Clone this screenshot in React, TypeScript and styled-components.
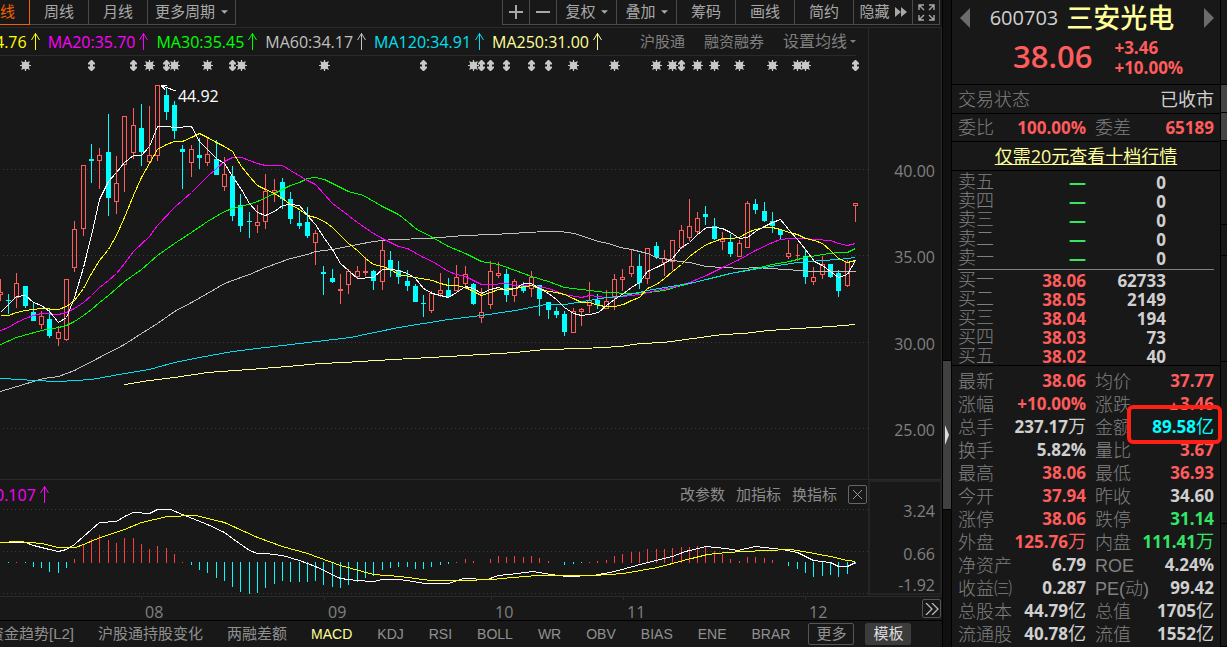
import React from "react";
import styled, { createGlobalStyle } from "styled-components";

const color = {
  bg: "#181818",
  line: "#2a2a2a",
  border: "#4a4a4a",
  text: "#a8a8a8",
  dim: "#808080",
  red: "#ff5c5c",
  green: "#33e666",
  cyan: "#00ffff",
  value: "#d0d0d0",
  yellow: "#ffff99",
  accent: "#f26100",
};

const latin = `"Open Sans", "Noto Sans CJK SC", sans-serif`;
const han = `"Liberation Sans", "Noto Sans CJK SC", sans-serif`;

const GlobalStyle = createGlobalStyle`
  *, *::before, *::after { box-sizing: border-box; }
  body { margin: 0; background: ${color.bg}; color: ${color.text}; font: 15px/20px ${han}; }
  button { font: inherit; color: inherit; background: none; border: 0; padding: 0; margin: 0; cursor: pointer; white-space: nowrap; }
  a { color: inherit; }
  svg { display: block; }
`;

/* ---------- page frame ---------- */

const Page = styled.div`
  display: flex;
  min-height: 100vh;
  overflow: hidden;
`;

const Main = styled.main`
  flex: 1;
  min-width: 0;
  display: flex;
  flex-direction: column;
  overflow: hidden;
`;

const Gutter = styled.div`
  width: 9px;
  display: grid;
  grid-template-rows: 360fr 150fr 137fr;
  background: #101010;
  border-left: 1px solid #000;
`;

const Thumb = styled.button`
  grid-row: 2;
  display: flex;
  align-items: center;
  justify-content: center;
  background: #404040;
  border-top: 1px solid #000;
  border-bottom: 1px solid #000;
`;

const Panel = styled.aside`
  width: 270px;
  flex: none;
  border: solid #000;
  border-width: 0 1px;
`;

const Strip = styled.div`
  width: 6px;
  flex: none;
  display: grid;
  grid-template-rows: 85fr 28fr 28fr 84fr 31fr 106fr 162fr 123fr;
`;

const StripCell = styled.div<{ $filled?: boolean }>`
  background: ${(p) => (p.$filled ? "#444" : "none")};
  border-bottom: 1px solid #000;
`;

/* ---------- toolbar ---------- */

const Toolbar = styled.div`
  display: flex;
  justify-content: space-between;
  height: 28px;
  padding-right: 2px;
  border-bottom: 1px solid ${color.line};
`;

const ButtonGroup = styled.div`
  display: flex;
  height: 25px;
`;

const PeriodButton = styled.button<{ $width: number; $active?: boolean }>`
  display: flex;
  align-items: center;
  justify-content: ${(p) => (p.$active ? "flex-start" : "center")};
  gap: 6px;
  width: ${(p) => p.$width}px;
  color: ${(p) => (p.$active ? color.accent : color.text)};
  border: solid ${(p) => (p.$active ? color.accent : color.border)};
  border-width: 0 1px 1px 0;
`;

const ToolButton = styled.button<{ $width: number }>`
  display: flex;
  align-items: center;
  justify-content: center;
  gap: 5px;
  width: ${(p) => p.$width}px;
  border: solid ${color.border};
  border-width: 0 0 1px 1px;
  &:last-child {
    border-right-width: 1px;
  }
`;

/* ---------- price chart ---------- */

const ChartRow = styled.section<{ $grow?: boolean }>`
  display: flex;
  flex: ${(p) => (p.$grow ? "1" : "none")};
`;

const Plot = styled.div`
  flex: 1;
  min-width: 0;
  display: flex;
  flex-direction: column;
`;

const Legend = styled.div`
  display: flex;
  align-items: center;
  gap: 8px;
  height: 28px;
  margin-right: 12px;
  border-bottom: 1px solid ${color.line};
`;

const LegendItem = styled.span<{ $color: string; $clipped?: boolean }>`
  display: flex;
  align-items: center;
  gap: 4px;
  margin-left: ${(p) => (p.$clipped ? "-5px" : "0")};
  font: 16px/20px ${latin};
  color: ${(p) => p.$color};
  white-space: nowrap;
`;

const LegendLinks = styled.div`
  display: flex;
  gap: 19px;
  margin-left: auto;
  color: ${color.dim};
`;

const AverageButton = styled.button`
  display: flex;
  align-items: center;
  gap: 3px;
  font-size: 16px;
`;

const Canvas = styled.div`
  position: relative;
  flex: 1;
  min-height: 423px;
`;

const ChartSvg = styled.svg`
  position: absolute;
  inset: 0;
  width: 100%;
  height: 100%;
`;

const PeakLabel = styled.span`
  position: absolute;
  left: 20.5%;
  top: 7%;
  font: 16px/20px ${latin};
  color: #fff;
`;

const PriceAxis = styled.div`
  display: grid;
  grid-template-rows: 100fr 86fr 86fr 87fr 86fr 6fr;
  align-items: center;
  width: 74px;
  padding-right: 6px;
  border: solid ${color.line};
  border-width: 0 1px;
  font: 16px/20px ${latin};
  color: ${color.dim};
  text-align: right;
`;

const AxisLabel = styled.span<{ $row: number }>`
  grid-row: ${(p) => p.$row};
`;

/* ---------- indicator chart ---------- */

const IndicatorSection = styled(ChartRow)`
  height: 118px;
  border-top: 1px solid ${color.line};
  border-bottom: 1px solid ${color.line};
`;

const IndicatorHead = styled.div`
  display: flex;
  align-items: center;
  gap: 11px;
  height: 29px;
  padding-right: 1px;
`;

const IndicatorLinks = styled.div`
  display: flex;
  align-items: center;
  gap: 11px;
  margin-left: auto;
  color: #8c8c8c;
`;

const CloseButton = styled.button`
  display: grid;
  place-items: center;
  width: 19px;
  height: 19px;
  border: 1px solid #666;
  border-radius: 2px;
`;

const IndicatorSvg = styled.svg`
  width: 100%;
  height: 87px;
`;

const IndicatorAxis = styled.div`
  display: grid;
  grid-template-rows: 9fr 40fr 46fr 16fr;
  align-items: center;
  width: 74px;
  height: 115px;
  padding-right: 5px;
  border: 2px solid #242424;
  font: 16px/16px ${latin};
  color: ${color.dim};
  text-align: right;
`;

const TimeAxis = styled.div`
  display: grid;
  grid-template-columns: 141fr 183fr 167fr 132fr 182fr 137fr;
  height: 23px;
  font: 16px/16px ${latin};
  color: ${color.dim};
`;

const TimeCell = styled.div`
  display: flex;
  align-items: flex-end;
  gap: 3px;
  &:not(:first-child)::before {
    content: "";
    width: 1px;
    height: 3px;
    align-self: flex-start;
    background: ${color.line};
  }
`;

const ScrollButton = styled.button`
  display: grid;
  place-items: center;
  align-self: center;
  width: 19px;
  height: 19px;
  margin: 0 1px 0 auto;
  border: 1px solid #555;
  border-radius: 2px;
`;

/* ---------- indicator tabs ---------- */

const Tabs = styled.nav`
  display: flex;
  align-items: center;
  gap: 24px;
  height: 27px;
  border-top: 1px solid #000;
  color: #909090;
`;

const Tab = styled.button<{ $active?: boolean; $latin?: boolean; $clipped?: boolean }>`
  font-size: ${(p) => (p.$latin ? "14px" : "15px")};
  color: ${(p) => (p.$active ? color.yellow : "inherit")};
  margin-left: ${(p) => (p.$clipped ? "-11px" : "0")};
  margin-right: ${(p) => (p.$latin ? "1px" : "0")};
`;

const TabActions = styled.div`
  display: flex;
  gap: 11px;
  margin-left: -7px;
`;

const ActionButton = styled.button<{ $filled?: boolean }>`
  width: 46px;
  height: 22px;
  border: 1px solid ${(p) => (p.$filled ? "#3c3c3c" : "#555")};
  border-radius: 2px;
  background: ${(p) => (p.$filled ? "#3c3c3c" : "none")};
  color: ${(p) => (p.$filled ? "#ddd" : "inherit")};
`;

/* ---------- quote panel ---------- */

const QuoteHead = styled.header`
  height: 85px;
  border-bottom: 1px solid #000;
  font-family: ${latin};
`;

const NameRow = styled.div`
  display: flex;
  align-items: center;
  justify-content: space-between;
  height: 35px;
  padding: 0 6px 0 8px;
`;

const StockName = styled.h1`
  display: flex;
  align-items: center;
  gap: 8px;
  margin: 0;
  padding-right: 10px;
  font: 500 27px/35px ${latin};
  color: ${color.yellow};
`;

const StockCode = styled.span`
  font-size: 20px;
  font-weight: 400;
  color: ${color.value};
`;

const PriceRow = styled.div`
  display: flex;
  align-items: flex-start;
  gap: 22px;
  padding-left: 61px;
  color: ${color.red};
`;

const Price = styled.strong`
  font: 600 31px/42px ${latin};
`;

const Change = styled.div`
  padding-top: 3px;
  font: 700 17px/20px ${latin};
`;

const InfoRow = styled.div`
  display: flex;
  align-items: center;
  justify-content: space-between;
  height: 29px;
  padding: 2px 6px 0;
  border-bottom: 1px solid #000;
  font-size: 18px;
`;

const RatioRow = styled(InfoRow)`
  display: grid;
  grid-template-columns: 54px 74px 54px 1fr;
  height: 28px;
  padding-top: 0;
  > :nth-child(even) {
    text-align: right;
  }
  > :nth-child(3) {
    padding-left: 9px;
  }
`;

const LinkRow = styled(InfoRow)`
  justify-content: center;
  padding-top: 0;
  color: ${color.yellow};
  font-family: ${latin};
`;

const Label = styled.span`
  font-weight: 300;
  color: ${color.dim};
`;

const State = styled.span`
  color: ${color.value};
`;

const Figure = styled.span<{ $color?: string }>`
  font: 700 17px/19px ${latin};
  color: ${(p) => p.$color ?? color.value};
`;

const Unit = styled.span`
  font-size: 18px;
  font-weight: 400;
`;

const Book = styled.div`
  padding: 2px 6px 0;
  height: 195px;
  border-bottom: 1px solid #000;
`;

const BookTable = styled.table`
  width: 100%;
  border-collapse: separate;
  border-spacing: 0;
  table-layout: fixed;
  & + & {
    margin-top: 1px;
    padding-top: 1px;
    border-top: 1px solid #808080;
  }
`;

const BookRow = styled.tr`
  height: 19px;
  th,
  td {
    padding: 0;
    height: 19px;
    line-height: 19px;
    text-align: right;
  }
  th {
    width: 56px;
    font-size: 18px;
    text-align: left;
  }
  td:nth-child(2) {
    width: 72px;
  }
  td:last-child {
    padding-right: 48px;
  }
  ${Label}, ${Figure} {
    display: block;
  }
`;

const StatsTable = styled.table`
  width: calc(100% - 12px);
  margin: 4px 6px 0;
  border-collapse: collapse;
  table-layout: fixed;
`;

const StatsRow = styled.tr`
  height: 23px;
  th,
  td {
    padding: 0;
    height: 23px;
    line-height: 20px;
    white-space: nowrap;
  }
  th {
    width: 54px;
    font-size: 18px;
    text-align: left;
  }
  td {
    position: relative;
    text-align: right;
  }
  td:nth-child(2) {
    width: 74px;
  }
  th:nth-child(3) {
    padding-left: 9px;
  }
`;

const Highlight = styled.span`
  position: absolute;
  z-index: 1;
  left: -13px;
  right: -8px;
  top: -11px;
  height: 39px;
  border: 4px solid #ff2014;
  border-radius: 6px;
  pointer-events: none;
`;

const RiseMark = styled.svg`
  display: inline-block;
  width: 8px;
  height: 8px;
  margin-right: 2px;
`;

/* ---------- data ---------- */

// Colour (r rising, c falling), high, low, body top, body bottom.
type Candle = ["r" | "c", number, number, number, number];

const candles: Candle[] = [
  ["c", 294, 314, 300, 301], ["r", 273, 308, 283, 298], ["c", 286, 308, 286, 306], ["c", 302, 321, 312, 321],
  ["r", 311, 329, 316, 325], ["c", 308, 338, 319, 336], ["r", 326, 346, 332, 339], ["r", 279, 341, 279, 340],
  ["r", 221, 272, 229, 268], ["r", 165, 236, 165, 229], ["c", 144, 183, 159, 161], ["r", 148, 189, 155, 161],
  ["c", 114, 216, 152, 198], ["r", 156, 214, 183, 202], ["r", 116, 192, 116, 165], ["r", 108, 159, 125, 153],
  ["c", 104, 166, 128, 152], ["r", 106, 164, 155, 162], ["r", 85, 161, 85, 156], ["c", 88, 120, 95, 112],
  ["c", 101, 139, 105, 131], ["c", 145, 189, 149, 152], ["r", 145, 177, 149, 163], ["c", 138, 169, 155, 158],
  ["r", 138, 166, 154, 163], ["c", 140, 175, 159, 175], ["r", 157, 191, 174, 187], ["c", 166, 221, 176, 216],
  ["c", 194, 232, 205, 226], ["c", 212, 238, 221, 222], ["r", 205, 233, 222, 226], ["r", 174, 229, 191, 222],
  ["r", 179, 202, 190, 193], ["c", 178, 209, 182, 199], ["c", 192, 224, 199, 219], ["c", 211, 229, 223, 226],
  ["c", 207, 238, 222, 236], ["r", 230, 265, 233, 243], ["c", 266, 295, 272, 274], ["c", 269, 283, 278, 282],
  ["r", 274, 304, 289, 291], ["r", 269, 294, 271, 285], ["r", 266, 279, 271, 277], ["r", 257, 276, 271, 273],
  ["c", 270, 290, 271, 281], ["r", 241, 290, 250, 282], ["c", 251, 277, 260, 270], ["c", 261, 284, 270, 277],
  ["c", 270, 291, 281, 286], ["c", 284, 302, 286, 302], ["c", 295, 317, 303, 304], ["r", 291, 313, 293, 311],
  ["r", 273, 297, 290, 294], ["c", 278, 298, 290, 297], ["r", 265, 291, 277, 291], ["r", 266, 289, 274, 284],
  ["c", 283, 305, 284, 304], ["r", 288, 323, 312, 318], ["r", 261, 309, 271, 305], ["r", 262, 278, 273, 276],
  ["c", 269, 302, 274, 295], ["r", 279, 302, 281, 296], ["c", 282, 293, 286, 291], ["r", 271, 297, 277, 289],
  ["c", 285, 316, 285, 299], ["c", 302, 319, 302, 310], ["c", 307, 318, 311, 315], ["c", 311, 336, 314, 332],
  ["r", 308, 333, 311, 333], ["r", 308, 326, 309, 312], ["r", 282, 313, 300, 306], ["c", 294, 309, 300, 305],
  ["r", 290, 309, 301, 309], ["r", 274, 310, 279, 298], ["r", 269, 291, 277, 280], ["r", 250, 277, 266, 274],
  ["c", 254, 289, 266, 283], ["r", 248, 284, 248, 279], ["c", 242, 259, 246, 257], ["r", 250, 276, 258, 263],
  ["r", 240, 270, 240, 262], ["r", 225, 249, 230, 248], ["r", 199, 241, 226, 238], ["r", 212, 234, 218, 232],
  ["c", 206, 225, 214, 217], ["c", 218, 240, 226, 239], ["r", 232, 250, 239, 242], ["c", 234, 257, 242, 254],
  ["r", 240, 257, 243, 257], ["r", 201, 248, 203, 248], ["c", 199, 214, 204, 210], ["c", 202, 222, 211, 221],
  ["c", 212, 233, 221, 226], ["c", 229, 239, 230, 235], ["r", 240, 259, 253, 257], ["r", 244, 261, 255, 256],
  ["c", 249, 284, 256, 277], ["r", 267, 285, 277, 282], ["r", 256, 279, 264, 275], ["c", 264, 278, 264, 277],
  ["c", 270, 297, 273, 291], ["r", 260, 287, 262, 286], ["r", 203, 222, 203, 206],
];

const barX = (i: number) => Math.floor(8.46 + i * 8.303);

const averages = [
  { color: "#ffff99", points: "124,384 149,380 174,377 207,372 249,369 287,366 320,363 343,362 393,359 448,356 515,352 545,349 583,348 620,346 640,343 663,342 700,337 722,334 743,333 768,330 797,328 830,326 855,324" },
  { color: "#c0c0c0", points: "0,391 33,381 43,378 58,376 74,370 99,357 124,344 141,333 157,323 174,311 191,302 207,293 224,283 232,280 249,274 265,267 290,258 307,254 315,251 332,249 357,244 373,241 393,239 428,238 463,235 493,234 510,233 545,231 560,231 574,233 598,241 608,243 620,247 631,249 647,253 656,257 672,260 689,262 706,266 722,267 743,268 755,267 800,270 808,271 855,271" },
  { color: "#00ff00", points: "0,344 16,337 41,330 58,327 66,325 74,321 83,315 91,309 99,302 108,295 124,281 141,269 157,255 174,243 191,232 207,221 224,211 232,208 241,206 257,201 274,193 290,185 299,182 307,178 315,177 324,179 332,183 340,187 348,191 363,195 382,206 398,214 407,221 415,228 432,237 448,246 465,253 481,261 498,264 515,270 531,276 548,281 564,287 581,289 606,292 631,293 647,292 664,290 681,285 706,279 730,273 755,268 772,264 789,261 805,257 822,254 838,252 847,252 855,248" },
  { color: "#ff00ff", points: "0,330 8,327 16,322 25,318 33,315 41,313 58,314 66,312 74,308 83,302 91,295 99,287 108,280 116,273 124,263 133,251 149,236 157,225 174,207 191,192 207,176 224,161 232,157 241,157 257,163 265,165 282,165 290,170 307,180 315,184 324,194 332,203 340,209 357,222 373,233 382,238 398,246 407,248 423,257 432,261 448,271 456,274 465,276 481,284 490,284 506,283 515,285 531,285 548,288 564,294 581,297 589,295 606,297 623,296 639,294 656,290 672,287 689,282 706,275 722,267 739,259 755,250 772,242 780,239 789,238 805,238 814,239 830,240 838,243 847,245 855,243" },
  { color: "#00e0f0", points: "0,378 20,379 33,380 58,381 91,379 124,373 149,369 174,362 199,357 232,351 265,347 299,343 350,337 398,327 448,319 481,315 515,310 545,304 564,304 589,300 606,297 620,296 647,290 689,283 730,273 764,267 797,262 822,260 838,259 855,257" },
  { color: "#ffff00", points: "0,315 8,315 16,312 25,310 41,308 58,309 66,306 74,300 83,288 91,273 99,260 108,249 116,235 124,217 133,195 141,177 149,163 157,149 166,144 174,141 182,141 191,137 199,133 207,137 216,142 224,146 232,151 241,166 249,176 257,185 265,189 274,193 282,198 290,204 299,209 307,215 315,217 324,221 332,227 340,235 348,243 357,250 365,258 373,264 382,266 390,269 398,274 415,277 432,280 440,283 448,285 456,285 465,287 473,291 481,295 490,292 498,289 515,288 531,285 539,288 548,291 556,292 564,294 573,298 581,302 589,302 598,305 606,306 614,306 623,304 631,300 639,297 647,288 656,284 664,278 672,271 681,264 689,256 697,250 706,244 714,241 722,238 730,238 739,237 747,232 755,229 764,227 772,227 780,229 789,232 797,234 805,238 814,240 822,243 830,250 838,258 847,262 855,260" },
  { color: "#ffffff", points: "0,312 16,296 25,295 33,302 41,305 49,311 58,322 66,317 74,297 83,267 91,235 99,199 108,181 116,172 124,162 133,155 141,155 149,146 157,126 166,126 174,127 191,126 199,141 207,149 216,158 224,163 232,176 241,189 249,203 257,212 265,215 274,211 282,205 290,204 299,205 307,215 315,224 324,238 332,249 340,263 357,278 373,277 382,269 390,269 398,270 407,273 415,278 423,288 432,293 440,295 448,297 456,292 465,286 473,288 481,293 490,289 498,287 506,290 515,288 523,283 531,283 539,288 548,293 556,299 564,307 573,313 581,315 589,314 598,312 606,305 614,299 623,293 631,287 639,282 647,271 656,267 664,263 672,258 681,247 689,242 697,234 706,227 714,227 722,228 730,232 739,238 747,237 755,231 764,226 772,222 780,219 789,230 797,239 805,249 814,261 822,265 830,271 838,277 847,274 855,260" },
];

const starMarks = [25, 149, 174, 207, 241, 324, 473, 573, 614, 656, 672, 697, 714, 739, 772, 797, 805];
const arrowMarks = [91, 133, 166, 232, 423, 481, 490, 506, 531, 548, 681, 855];

// Histogram heights above (positive) or below (negative) the zero line.
const histogram = [
  -1, 1, -1, -5, -6, -10, -11, -6, 4, 18, 24, 28, 23, 20, 25, 25, 19, 14, 17, 15, 9, 1, -3, -8, -11, -16, -19, -25, -30,
  -32, -31, -26, -22, -19, -20, -20, -20, -19, -23, -25, -26, -23, -20, -16, -14, -8, -6, -5, -5, -7, -7, -5, -3, -2, 1,
  4, 2, 0, 4, 7, 6, 7, 6, 7, 5, 2, 0, -3, -2, -1, 1, 2, 3, 7, 9, 11, 11, 14, 14, 14, 15, 16, 16, 17, 16, 12, 9, 4, 2,
  6, 6, 5, 3, 0, -4, -7, -11, -15, -14, -13, -15, -12, -2,
];

const difPoints =
  "0,542 25,542 33,545 41,547 49,549 58,551 66,549 74,544 83,536 99,522 116,521 124,516 133,512 149,513 157,509 170,509 182,514 207,524 224,532 232,538 249,550 257,553 265,553 282,555 299,560 315,566 340,578 356,580 373,581 382,579 399,579 413,581 424,583 448,583 463,578 487,579 498,575 517,573 532,571 550,574 567,576 593,575 614,571 647,562 672,556 685,551 706,546 725,548 737,550 755,546 782,549 797,552 813,560 830,562 838,566 847,566 855,562";
const deaPoints =
  "0,542 17,541 41,543 58,547 75,547 83,544 100,537 124,529 141,522 167,516 195,515 224,522 257,537 282,546 307,553 340,565 373,574 400,576 430,580 460,580 493,579 500,578 537,575 593,575 623,573 657,567 683,560 707,554 727,552 743,551 790,549 803,551 830,556 847,560 855,561";

const legend = [
  { text: "4.76", color: "#ffff00" },
  { text: "MA20:35.70", color: "#ff00ff" },
  { text: "MA30:35.45", color: "#00ff00" },
  { text: "MA60:34.17", color: "#c0c0c0" },
  { text: "MA120:34.91", color: "#00e0f0" },
  { text: "MA250:31.00", color: "#ffff99" },
];

const latinTabs = ["MACD", "KDJ", "RSI", "BOLL", "WR", "OBV", "BIAS", "ENE", "BRAR"];

const sells = ["卖五", "卖四", "卖三", "卖二", "卖一"];
const buys = [
  ["买一", "38.06", "62733"],
  ["买二", "38.05", "2149"],
  ["买三", "38.04", "194"],
  ["买四", "38.03", "73"],
  ["买五", "38.02", "40"],
];

type Stat = { label: string; value: string; unit?: string; color?: string; rise?: boolean; marked?: boolean };

const { red, green, cyan } = color;
const stats: [Stat, Stat][] = [
  [{ label: "最新", value: "38.06", color: red }, { label: "均价", value: "37.77", color: red }],
  [{ label: "涨幅", value: "+10.00%", color: red }, { label: "涨跌", value: "3.46", color: red, rise: true }],
  [{ label: "总手", value: "237.17", unit: "万" }, { label: "金额", value: "89.58", unit: "亿", color: cyan, marked: true }],
  [{ label: "换手", value: "5.82%" }, { label: "量比", value: "3.67", color: red }],
  [{ label: "最高", value: "38.06", color: red }, { label: "最低", value: "36.93", color: red }],
  [{ label: "今开", value: "37.94", color: red }, { label: "昨收", value: "34.60" }],
  [{ label: "涨停", value: "38.06", color: red }, { label: "跌停", value: "31.14", color: green }],
  [{ label: "外盘", value: "125.76", unit: "万", color: red }, { label: "内盘", value: "111.41", unit: "万", color: green }],
  [{ label: "净资产", value: "6.79" }, { label: "ROE", value: "4.24%" }],
  [{ label: "收益㈢", value: "0.287" }, { label: "PE(动)", value: "99.42" }],
  [{ label: "总股本", value: "44.79", unit: "亿" }, { label: "总值", value: "1705", unit: "亿" }],
  [{ label: "流通股", value: "40.78", unit: "亿" }, { label: "流值", value: "1552", unit: "亿" }],
];

/* ---------- icons ---------- */

const Caret = ({ small }: { small?: boolean }) => (
  <svg width={small ? 6 : 7} height={small ? 3 : 4} viewBox="0 0 8 4" fill="currentColor">
    <path d="M0 0h8L4 4z" />
  </svg>
);

const UpArrow = () => (
  <svg width="9" height="17" viewBox="0 0 9 17" fill="none" stroke="currentColor">
    <path d="M4.5 0v17M4.5 .5L.5 7M4.5 .5L8.5 7" />
  </svg>
);

const Cross = ({ minus }: { minus?: boolean }) => (
  <svg width="14" height="14" viewBox="0 0 14 14" stroke="currentColor" strokeWidth="2">
    <path d={minus ? "M0 7h14" : "M0 7h14M7 0v14"} />
  </svg>
);

const Expand = () => (
  <svg width="17" height="17" viewBox="0 0 17 17" fill="none" stroke="currentColor" strokeWidth="1.4">
    <path d="M1 6V1h5M1 1l5 5M11 1h5v5M16 1l-5 5M1 11v5h5M1 16l5-5M11 16h5v-5M16 16l-5-5" />
  </svg>
);

const FastForward = () => (
  <svg width="12" height="10" viewBox="0 0 12 10" fill="currentColor">
    <path d="M0 0l6 5-6 5zM6 0l6 5-6 5z" />
  </svg>
);

const DoubleChevron = () => (
  <svg width="14" height="12" viewBox="0 0 14 12" fill="none" stroke="#bbb" strokeWidth="1.3">
    <path d="M1 0l6 6-6 6M7 0l6 6-6 6" />
  </svg>
);

const Step = ({ back }: { back?: boolean }) => (
  <svg width="10" height="20" viewBox="0 0 10 20" fill="#6c6c6c">
    <path d={back ? "M10 0v20L0 10z" : "M0 0v20L10 10z"} />
  </svg>
);

const Star = ({ x }: { x: number }) => (
  <g transform={`translate(${x + 0.5} 65.5)`} stroke="#c8c8c8">
    <circle r="3.5" fill="#c8c8c8" />
    <path d="M0-5.5v11M-5.5 0h11M-4-4l8 8M4-4l-8 8" strokeWidth="1.2" />
  </g>
);

const UpDown = ({ x }: { x: number }) => (
  <path
    transform={`translate(${x + 0.5} 65.5)`}
    fill="#c8c8c8"
    d="M-.5-5.500h1L3.500-2.500v1.500h-2v2h2v1.500L.5 5.500h-1L-3.500 2.500v-1.500h2v-2h-2v-1.500z"
  />
);

/* ---------- charts ---------- */

const GridLine = ({ y }: { y: number }) => (
  <line x1="3" x2="872" y1={y + 0.5} y2={y + 0.5} stroke="#3c3c3c" strokeDasharray="1 3" />
);

const CandleBar = ({ index, data }: { index: number; data: Candle }) => {
  const [kind, high, low, top, bottom] = data;
  const x = barX(index);
  if (kind === "c") {
    return (
      <g fill={color.cyan}>
        <rect x={x} y={high} width="1" height={low - high} />
        <rect x={x - 2} y={top} width="5" height={bottom - top} />
      </g>
    );
  }
  return (
    <g fill={color.red}>
      <rect x={x} y={high} width="1" height={Math.max(top - high, 0)} />
      <rect x={x} y={bottom} width="1" height={Math.max(low - bottom, 0)} />
      <path
        fill="none"
        stroke={color.red}
        d={`M${x - 1.5} ${top + 0.5}h4v${Math.max(bottom - top - 1, 0)}h-4z`}
      />
    </g>
  );
};

const PriceChart = () => (
  <Canvas>
    <ChartSvg viewBox="0 56 868 423" preserveAspectRatio="none">
      <g shapeRendering="crispEdges">
        {[169, 255, 342, 428].map((y) => (
          <GridLine key={y} y={y} />
        ))}
        <path d="M0.500 279v13M0.500 295v6M0 292.500h2.500v2H0" stroke={color.red} fill="none" />
        {candles.map((c, i) => (
          <CandleBar key={i} index={i} data={c} />
        ))}
        {averages.map((a) => (
          <polyline key={a.color} points={a.points} fill="none" stroke={a.color} transform="translate(.5 .5)" />
        ))}
        <path d="M161 85.500l15 5.500M161 85.500h6M161 85.500l4 4" stroke="#fff" fill="none" />
      </g>
      {starMarks.map((x) => (
        <Star key={x} x={x} />
      ))}
      {arrowMarks.map((x) => (
        <UpDown key={x} x={x} />
      ))}
    </ChartSvg>
    <PeakLabel>44.92</PeakLabel>
  </Canvas>
);

const IndicatorChart = () => (
  <IndicatorSvg viewBox="0 509 868 87" preserveAspectRatio="none" shapeRendering="crispEdges">
    {[509, 551, 593].map((y) => (
      <GridLine key={y} y={y} />
    ))}
    {histogram.map((h, i) => (
      <rect
        key={i}
        x={barX(i)}
        y={h > 0 ? 563 - h : 562}
        width="1"
        height={Math.abs(h)}
        fill={h > 0 ? "#ff3c3c" : color.cyan}
      />
    ))}
    <polyline points={difPoints} fill="none" stroke="#fff" transform="translate(.5 .5)" />
    <polyline points={deaPoints} fill="none" stroke="#ff0" transform="translate(.5 .5)" />
  </IndicatorSvg>
);

/* ---------- panel parts ---------- */

const StatCells = ({ stat }: { stat: Stat }) => (
  <>
    <th scope="row">
      <Label>{stat.label}</Label>
    </th>
    <td>
      <Figure $color={stat.color}>
        {stat.rise && (
          <RiseMark viewBox="0 0 7 7" fill="currentColor">
            <path d="M3.500 0L7 7H0z" />
          </RiseMark>
        )}
        {stat.value}
        {stat.unit && <Unit>{stat.unit}</Unit>}
      </Figure>
      {stat.marked && <Highlight />}
    </td>
  </>
);

const QuotePanel = () => (
  <Panel>
    <QuoteHead>
      <NameRow>
        <button aria-label="上一只">
          <Step back />
        </button>
        <StockName>
          <StockCode>600703</StockCode>三安光电
        </StockName>
        <button aria-label="下一只">
          <Step />
        </button>
      </NameRow>
      <PriceRow>
        <Price>38.06</Price>
        <Change>
          <div>+3.46</div>
          <div>+10.00%</div>
        </Change>
      </PriceRow>
    </QuoteHead>
    <InfoRow>
      <Label>交易状态</Label>
      <State>已收市</State>
    </InfoRow>
    <RatioRow>
      <Label>委比</Label>
      <Figure $color={red}>100.00%</Figure>
      <Label>委差</Label>
      <Figure $color={red}>65189</Figure>
    </RatioRow>
    <LinkRow>
      <a href="#level2">仅需20元查看十档行情</a>
    </LinkRow>
    <Book>
      <BookTable>
        <tbody>
          {sells.map((label) => (
            <BookRow key={label}>
              <th scope="row">
                <Label>{label}</Label>
              </th>
              <td>
                <Figure $color={green}>—</Figure>
              </td>
              <td>
                <Figure>0</Figure>
              </td>
            </BookRow>
          ))}
        </tbody>
      </BookTable>
      <BookTable>
        <tbody>
          {buys.map(([label, price, volume]) => (
            <BookRow key={label}>
              <th scope="row">
                <Label>{label}</Label>
              </th>
              <td>
                <Figure $color={red}>{price}</Figure>
              </td>
              <td>
                <Figure>{volume}</Figure>
              </td>
            </BookRow>
          ))}
        </tbody>
      </BookTable>
    </Book>
    <StatsTable>
      <tbody>
        {stats.map(([left, right]) => (
          <StatsRow key={left.label}>
            <StatCells stat={left} />
            <StatCells stat={right} />
          </StatsRow>
        ))}
      </tbody>
    </StatsTable>
  </Panel>
);

export default function App() {
  return (
    <Page>
      <GlobalStyle />
      <Main>
        <Toolbar>
          <ButtonGroup>
            <PeriodButton $width={30} $active>线</PeriodButton>
            <PeriodButton $width={59}>周线</PeriodButton>
            <PeriodButton $width={59}>月线</PeriodButton>
            <PeriodButton $width={88}>更多周期 <Caret /></PeriodButton>
          </ButtonGroup>
          <ButtonGroup>
            <ToolButton $width={27} aria-label="放大"><Cross /></ToolButton>
            <ToolButton $width={27} aria-label="缩小"><Cross minus /></ToolButton>
            <ToolButton $width={60}>复权 <Caret /></ToolButton>
            <ToolButton $width={60}>叠加 <Caret /></ToolButton>
            <ToolButton $width={59}>筹码</ToolButton>
            <ToolButton $width={59}>画线</ToolButton>
            <ToolButton $width={59}>简约</ToolButton>
            <ToolButton $width={59}>隐藏 <FastForward /></ToolButton>
            <ToolButton $width={28} aria-label="全屏"><Expand /></ToolButton>
          </ButtonGroup>
        </Toolbar>
        <ChartRow $grow>
          <Plot>
            <Legend>
              {legend.map((item, i) => (
                <LegendItem key={item.text} $color={item.color} $clipped={i === 0}>
                  {item.text}
                  <UpArrow />
                </LegendItem>
              ))}
              <LegendLinks>
                <button>沪股通</button>
                <button>融资融券</button>
                <AverageButton>设置均线 <Caret small /></AverageButton>
              </LegendLinks>
            </Legend>
            <PriceChart />
          </Plot>
          <PriceAxis>
            <AxisLabel $row={2}>40.00</AxisLabel>
            <AxisLabel $row={3}>35.00</AxisLabel>
            <AxisLabel $row={4}>30.00</AxisLabel>
            <AxisLabel $row={5}>25.00</AxisLabel>
          </PriceAxis>
        </ChartRow>
        <IndicatorSection>
          <Plot>
            <IndicatorHead>
              <LegendItem $color="#ff00ff" $clipped>
                0.107
                <UpArrow />
              </LegendItem>
              <IndicatorLinks>
                <button>改参数</button>
                <button>加指标</button>
                <button>换指标</button>
                <CloseButton aria-label="关闭">
                  <svg width="11" height="11" viewBox="0 0 11 11" stroke="#999">
                    <path d="M1 1l9 9M10 1l-9 9" />
                  </svg>
                </CloseButton>
              </IndicatorLinks>
            </IndicatorHead>
            <IndicatorChart />
          </Plot>
          <IndicatorAxis>
            <AxisLabel $row={2}>3.24</AxisLabel>
            <AxisLabel $row={3}>0.66</AxisLabel>
            <AxisLabel $row={4}>-1.92</AxisLabel>
          </IndicatorAxis>
        </IndicatorSection>
        <TimeAxis>
          <TimeCell />
          <TimeCell>08</TimeCell>
          <TimeCell>09</TimeCell>
          <TimeCell>10</TimeCell>
          <TimeCell>11</TimeCell>
          <TimeCell>
            12
            <ScrollButton aria-label="向右滚动"><DoubleChevron /></ScrollButton>
          </TimeCell>
        </TimeAxis>
        <Tabs>
          <Tab $clipped>资金趋势[L2]</Tab>
          <Tab>沪股通持股变化</Tab>
          <Tab>两融差额</Tab>
          {latinTabs.map((name) => (
            <Tab key={name} $latin $active={name === "MACD"}>
              {name}
            </Tab>
          ))}
          <TabActions>
            <ActionButton>更多</ActionButton>
            <ActionButton $filled>模板</ActionButton>
          </TabActions>
        </Tabs>
      </Main>
      <Gutter>
        <Thumb aria-label="收起侧栏">
          <svg width="4" height="20" viewBox="0 0 4 20" fill="#ddd">
            <path d="M0 0l4 10-4 10z" />
          </svg>
        </Thumb>
      </Gutter>
      <QuotePanel />
      <Strip>
        <StripCell />
        <StripCell $filled />
        <StripCell $filled />
        <StripCell />
        <StripCell />
        <StripCell />
        <StripCell />
        <StripCell />
      </Strip>
    </Page>
  );
}
